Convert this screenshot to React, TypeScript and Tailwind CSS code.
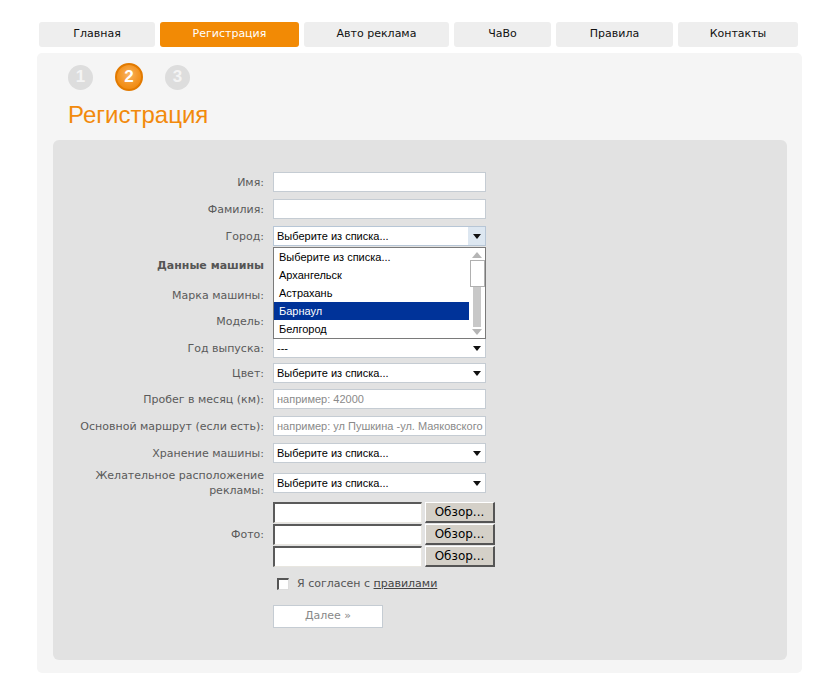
import React from "react";

const font = { fontFamily: '"DejaVu Sans", Verdana, sans-serif' };

const tabs = [
  { t: "Главная", w: "w-[116px]" },
  { t: "Регистрация", w: "w-[139px]", active: true },
  { t: "Авто реклама", w: "w-[145px]" },
  { t: "ЧаВо", w: "w-[97px]" },
  { t: "Правила", w: "w-[117px]" },
  { t: "Контакты", w: "w-[120px]" },
];

function Arrow() {
  return (
    <svg width="8" height="5" viewBox="0 0 8 5" className="block">
      <path d="M0 0 H8 L4 5 Z" fill="#111" />
    </svg>
  );
}

function Label({ children, cls = "" }: { children: React.ReactNode; cls?: string }) {
  return (
    <div className={`w-[211px] text-right text-[11px] text-[#5a5a5a] leading-[15px] ${cls}`}>{children}</div>
  );
}

function TextBox({ placeholder }: { placeholder?: string }) {
  return (
    <div className="ml-[9px] w-[213px] h-[20px] bg-white border border-[#c5ccd3] flex items-center px-[3px] overflow-hidden whitespace-nowrap">
      {placeholder ? (
        <span className="text-[11px] text-[#8a8a8a]" style={{ fontFamily: '"Liberation Sans", Arial, sans-serif' }}>
          {placeholder}
        </span>
      ) : null}
    </div>
  );
}

function Select({ value, hover = false }: { value?: string; hover?: boolean }) {
  return (
    <div
      className={`w-[213px] h-[20px] bg-white border ${hover ? "border-[#b7c6d6]" : "border-[#c5ccd3]"} flex items-stretch`}
    >
      <div
        className="flex-1 flex items-center pl-[3px] text-[11px] text-black whitespace-nowrap"
        style={{ fontFamily: '"Liberation Sans", Arial, sans-serif' }}
      >
        {value}
      </div>
      <div className={`w-[17px] flex items-center justify-center ${hover ? "bg-[#dde7f1]" : ""}`}>
        <Arrow />
      </div>
    </div>
  );
}

function Row({ label, children, mt, labelCls }: { label: React.ReactNode; children: React.ReactNode; mt: string; labelCls?: string }) {
  return (
    <div className={`flex items-center ${mt}`}>
      <Label cls={labelCls}>{label}</Label>
      {children}
    </div>
  );
}

function FileInput() {
  return (
    <div className="flex items-center">
      <div className="w-[149px] h-[21px] bg-white border-t-2 border-l-2 border-t-[#5a5a5a] border-l-[#5a5a5a] border-b border-r border-b-[#e8e6e0] border-r-[#e8e6e0]" />
      <div
        className="ml-[3px] w-[70px] h-[21px] bg-[#d4d0c8] border-t border-l border-t-white border-l-white border-b-2 border-r-2 border-b-[#555] border-r-[#555] flex items-center justify-center text-[12px] text-black"
        style={font}
      >
        Обзор...
      </div>
    </div>
  );
}

const items = ["Выберите из списка...", "Архангельск", "Астрахань", "Барнаул", "Белгород"];

function Dropdown() {
  return (
    <div className="absolute left-0 top-[21px] w-[213px] h-[92px] bg-white border border-[#7a7a7a] z-10 flex">
      <div className="w-[195px] flex flex-col" style={{ fontFamily: '"Liberation Sans", Arial, sans-serif' }}>
        {items.map((it) => (
          <div
            key={it}
            className={`h-[18px] flex items-center pl-[5px] text-[11px] ${it === "Барнаул" ? "bg-[#003399] text-white" : "text-black"}`}
          >
            {it}
          </div>
        ))}
      </div>
      <div className="w-[16px] flex flex-col items-center">
        <svg width="10" height="6" viewBox="0 0 10 6" className="mt-[4px]">
          <path d="M0 6 L5 0 L10 6 Z" fill="#b5b5b5" />
        </svg>
        <div className="mt-[2px] w-[15px] h-[27px] bg-white border border-[#b0b0b0]" />
        <div className="w-[8px] h-[40px] bg-[#c8c8c8]" />
        <svg width="10" height="6" viewBox="0 0 10 6" className="mt-[2px]">
          <path d="M0 0 L10 0 L5 6 Z" fill="#b5b5b5" />
        </svg>
      </div>
    </div>
  );
}

function Step({ n, active = false }: { n: number; active?: boolean }) {
  if (active) {
    return (
      <div
        className="w-[28px] h-[28px] rounded-full border-2 border-[#e27a00] flex items-center justify-center text-white font-bold text-[17px] bg-[radial-gradient(circle_at_50%_40%,#f9b463_0%,#f39422_55%,#ee8200_100%)]"
        style={{ fontFamily: '"Liberation Sans", Arial, sans-serif' }}
      >
        {n}
      </div>
    );
  }
  return (
    <div
      className="w-[25px] h-[25px] rounded-full bg-[#dddddd] flex items-center justify-center text-[#f4f4f4] font-bold text-[17px]"
      style={{ fontFamily: '"Liberation Sans", Arial, sans-serif' }}
    >
      {n}
    </div>
  );
}

export default function App() {
  return (
    <div className="w-[832px] h-[680px] bg-white overflow-hidden" style={font}>
      <div className="ml-[39px] pt-[22px] flex gap-[5px]">
        {tabs.map((t) => (
          <div
            key={t.t}
            className={`${t.w} h-[25px] rounded-[3px] flex items-center justify-center text-[11px] ${t.active ? "bg-[#f28a05] text-white" : "bg-[#eeeeee] text-[#111]"}`}
          >
            {t.t}
          </div>
        ))}
      </div>

      <div className="ml-[37px] mt-[6px] w-[765px] h-[620px] bg-[#f5f5f5] rounded-[5px] pt-[10px]">
        <div className="ml-[31px] h-[28px] flex items-center gap-[22px]">
          <Step n={1} />
          <Step n={2} active />
          <Step n={3} />
        </div>
        <div
          className="ml-[31px] mt-[11px] text-[24px] leading-[25px] text-[#f28a0c]"
          style={{ fontFamily: '"Liberation Sans", Arial, sans-serif' }}
        >
          Регистрация
        </div>

        <div className="ml-[16px] mt-[13px] w-[734px] h-[520px] bg-[#e2e2e2] rounded-[6px] pt-[32px] flex flex-col">
          <Row label="Имя:" mt="mt-0">
            <TextBox />
          </Row>
          <Row label="Фамилия:" mt="mt-[7px]">
            <TextBox />
          </Row>
          <Row label="Город:" mt="mt-[7px]">
            <div className="ml-[9px] relative">
              <Select value="Выберите из списка..." hover />
              <Dropdown />
            </div>
          </Row>
          <div className="flex items-center mt-[10px] h-[20px]">
            <div className="w-[211px] text-right text-[11px] font-bold text-[#555]">Данные машины</div>
          </div>
          <Row label="Марка машины:" mt="mt-[9px]">
            <div className="ml-[9px]">
              <Select />
            </div>
          </Row>
          <Row label="Модель:" mt="mt-[6px]">
            <div className="ml-[9px]">
              <Select />
            </div>
          </Row>
          <Row label="Год выпуска:" mt="mt-[7px]">
            <div className="ml-[9px]">
              <Select value="---" />
            </div>
          </Row>
          <Row label="Цвет:" mt="mt-[5px]">
            <div className="ml-[9px]">
              <Select value="Выберите из списка..." />
            </div>
          </Row>
          <Row label="Пробег в месяц (км):" mt="mt-[6px]">
            <TextBox placeholder="например: 42000" />
          </Row>
          <Row label="Основной маршрут (если есть):" mt="mt-[7px]">
            <TextBox placeholder="например: ул Пушкина -ул. Маяковского" />
          </Row>
          <Row label="Хранение машины:" mt="mt-[7px]">
            <div className="ml-[9px]">
              <Select value="Выберите из списка..." />
            </div>
          </Row>
          <Row label={<>Желательное расположение<br />рекламы:</>} mt="mt-[5px]">
            <div className="ml-[9px]">
              <Select value="Выберите из списка..." />
            </div>
          </Row>
          <Row label="Фото:" mt="mt-[4px]">
            <div className="ml-[9px] flex flex-col gap-[1px]">
              <FileInput />
              <FileInput />
              <FileInput />
            </div>
          </Row>
          <div className="flex items-center mt-[10px] ml-[224px]">
            <div className="w-[12px] h-[12px] bg-white border-t-2 border-l-2 border-t-[#555] border-l-[#555] border-b border-r border-b-[#ddd] border-r-[#ddd]" />
            <div className="ml-[8px] text-[11px] text-[#555] leading-[13px]">
              Я согласен с <span className="underline text-[#444]">правилами</span>
            </div>
          </div>
          <div className="ml-[220px] mt-[15px] w-[110px] h-[23px] bg-white border border-[#c5ccd3] flex items-center justify-center text-[11px] text-[#888]">
            Далее »
          </div>
        </div>
      </div>
    </div>
  );
}
